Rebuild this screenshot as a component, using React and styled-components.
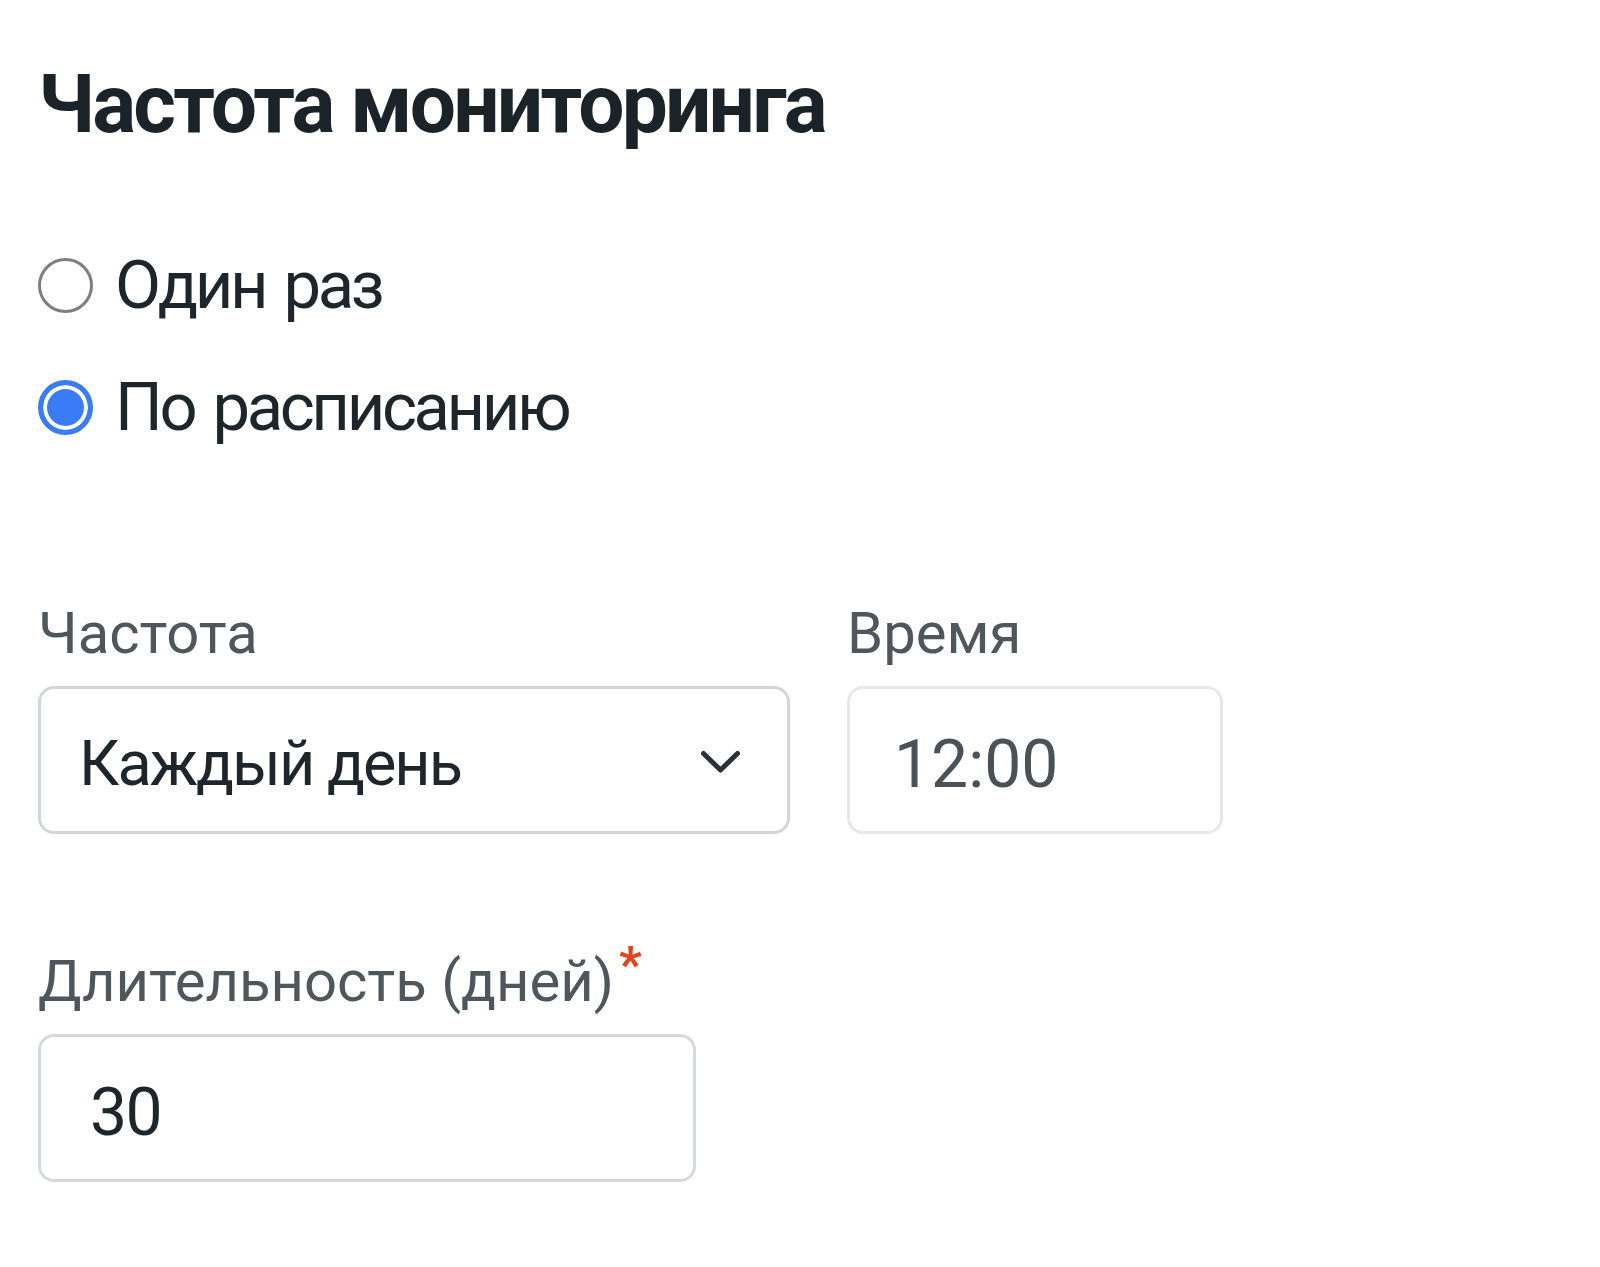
import React from 'react'
import styled, { createGlobalStyle } from 'styled-components'

const GlobalStyle = createGlobalStyle`
  * {
    box-sizing: border-box;
  }
  body {
    margin: 0;
    background: #fff;
    font-family: Roboto, "Noto Sans", sans-serif;
  }
`

const App = () => {
  return (
    <>
      <GlobalStyle />
      <Page>
        <Title>Частота мониторинга</Title>

        <RadioGroup>
          <RadioRow>
            <Radio type="radio" name="mode" value="once" />
            <RadioText>Один раз</RadioText>
          </RadioRow>
          <RadioRow>
            <Radio type="radio" name="mode" value="schedule" defaultChecked />
            <RadioText>По расписанию</RadioText>
          </RadioRow>
        </RadioGroup>

        <FieldsRow>
          <Field $width={752}>
            <Label>Частота</Label>
            <SelectBox>
              <span>Каждый день</span>
              <svg width="41" height="24" viewBox="0 0 41 24" fill="none">
                <polyline
                  points="3.5,3.5 20.5,20 37.5,3.5"
                  stroke="#2b3137"
                  strokeWidth="5"
                  strokeLinecap="round"
                  strokeLinejoin="round"
                />
              </svg>
            </SelectBox>
          </Field>
          <Field $width={376}>
            <Label>Время</Label>
            <TextInput $light $pad={44} type="text" defaultValue="12:00" readOnly />
          </Field>
        </FieldsRow>

        <Field $width={658} $top={115}>
          <Label>
            Длительность (дней)
            <Required>*</Required>
          </Label>
          <TextInput $pad={49} type="text" defaultValue="30" />
        </Field>
      </Page>
    </>
  )
}

const Page = styled.div`
  padding: 55px 0 60px 38px;
  color: #1e262c;
`

const Title = styled.h1`
  margin: 0;
  font-size: 82px;
  line-height: 1.2;
  font-weight: 700;
  letter-spacing: -2.8px;
  color: #1b2329;
`

const RadioGroup = styled.div`
  margin-top: 97px;
  display: flex;
  flex-direction: column;
  gap: 52px;
`

const RadioRow = styled.label`
  display: flex;
  align-items: center;
  height: 70px;
  cursor: pointer;
`

const Radio = styled.input`
  appearance: none;
  margin: 0 22px 0 0;
  width: 55px;
  height: 55px;
  border-radius: 50%;
  border: 3px solid #7e7e7e;
  background: #fff;
  flex-shrink: 0;

  &:checked {
    border: 5px solid #3a7cf5;
    background: #3a7cf5;
    box-shadow: inset 0 0 0 4px #fff;
  }
`

const RadioText = styled.span`
  font-size: 67px;
  line-height: 70px;
  letter-spacing: -3.4px;
  word-spacing: 5px;
  color: #1e262c;
`

const FieldsRow = styled.div`
  margin-top: 159px;
  display: flex;
  gap: 57px;
`

const Field = styled.div`
  width: ${p => p.$width}px;
  margin-top: ${p => p.$top || 0}px;
  display: flex;
  flex-direction: column;
`

const Label = styled.div`
  display: flex;
  align-items: flex-start;
  font-size: 58px;
  line-height: 64px;
  color: #4f565c;
  margin-bottom: 21px;
  white-space: nowrap;
`

const Required = styled.span`
  font-size: 50px;
  line-height: 50px;
  margin: -9px 0 0 5px;
  color: #e0461e;
  font-weight: 700;
`

const SelectBox = styled.div`
  height: 148px;
  display: flex;
  align-items: center;
  justify-content: space-between;
  padding: 6px 46px 0 38px;
  border: 3px solid #d3d6d9;
  border-radius: 16px;
  background: #fff;
  font-size: 63px;
  letter-spacing: -2px;
  color: #1e262c;

  svg {
    margin-top: -2px;
  }
`

const TextInput = styled.input`
  height: 148px;
  width: 100%;
  margin: 0;
  padding: 8px 20px 0 ${p => p.$pad}px;
  border: 3px solid ${p => (p.$light ? '#e6e8ea' : '#d6d9dc')};
  border-radius: 16px;
  background: #fff;
  font-family: Roboto, "Noto Sans", sans-serif;
  font-size: 66px;
  letter-spacing: ${p => (p.$light ? '0' : '-1.5px')};
  color: ${p => (p.$light ? '#4a5157' : '#1e262c')};
  outline: none;
`

export default App
